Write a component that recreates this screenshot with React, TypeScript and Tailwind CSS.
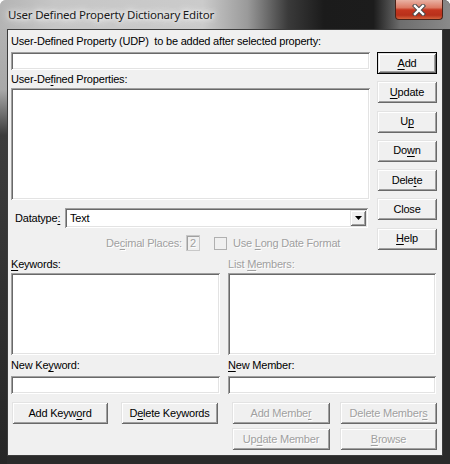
import type { ReactNode } from 'react';

const raised =
  'shadow-[inset_1px_1px_0_#e3e3e3,inset_-1px_-1px_0_#696969,inset_2px_2px_0_#ffffff,inset_-2px_-2px_0_#a0a0a0]';
const sunken =
  'shadow-[inset_1px_1px_0_#a0a0a0,inset_-1px_-1px_0_#ffffff,inset_2px_2px_0_#696969,inset_-2px_-2px_0_#e3e3e3]';
const greyText = 'text-[#a0a0a0] [text-shadow:1px_1px_0_#ffffff]';

function U({ children }: { children: ReactNode }) {
  return <span className="underline underline-offset-[2px]">{children}</span>;
}

interface BtnProps {
  children: ReactNode;
  disabled?: boolean;
  isDefault?: boolean;
  className?: string;
}

function Btn({ children, disabled, isDefault, className = '' }: BtnProps) {
  return (
    <div
      className={`h-[22px] flex items-center justify-center bg-[#f0f0f0] text-[11px] leading-[13px] whitespace-nowrap ${
        isDefault ? 'border border-black' : ''
      } ${raised} ${disabled ? greyText : 'text-black'} ${className}`}
    >
      {children}
    </div>
  );
}

function Label({ children, disabled }: { children: ReactNode; disabled?: boolean }) {
  return (
    <div className={`h-[13px] text-[11px] leading-[13px] whitespace-nowrap ${disabled ? greyText : 'text-black'}`}>
      {children}
    </div>
  );
}

function TitleBar() {
  return (
    <div className="h-[29px] flex items-start bg-[linear-gradient(90deg,#b4b4b4_0%,#c6c6c6_12%,#cbcbcb_45%,#9a9a9a_55%,#3a3a3a_64%,#1b1b1b_72%,#1c1c1c_83%,#6e6e6e_89%,#8a8a8a_100%)]">
      <div className="pl-[8px] pt-[7px] text-[11.5px] leading-[16px] text-[#1a1a1a] [font-family:'Noto_Sans',sans-serif] [text-shadow:0_0_8px_#ffffff,0_0_4px_#ffffff,0_0_12px_#ffffff]">
        User Defined Property Dictionary Editor
      </div>
      <div className="ml-auto mr-[7px] w-[48px] h-[20px] rounded-b-[4px] border border-t-0 border-[#4a2218] bg-[linear-gradient(180deg,#e9b2a4_0%,#dc7a64_40%,#c4361f_52%,#b8301a_80%,#d2623c_100%)] flex items-center justify-center">
        <svg width="14" height="12" viewBox="0 0 14 12">
          <path d="M3 2 L11 10 M11 2 L3 10" stroke="#4a4a4a" strokeWidth="4.4" strokeLinecap="square" />
          <path d="M3 2 L11 10 M11 2 L3 10" stroke="#ffffff" strokeWidth="2.4" strokeLinecap="square" />
        </svg>
      </div>
    </div>
  );
}

export default function App() {
  return (
    <div className="w-[450px] h-[464px] flex flex-col rounded-t-[6px] overflow-hidden [font-family:'Liberation_Sans',Arial,sans-serif] tracking-[-0.2px] bg-[linear-gradient(90deg,transparent_0,transparent_7px,#2a2a2a_7px),linear-gradient(180deg,#b8b8b8_0,#a8a8a8_90px,#3c3c3c_135px,#262626_100%)]">
      <TitleBar />

      <div className="mx-[7px] mb-[8px] flex-1 bg-[#f0f0f0] border border-[#3c3c3c] pl-[3px] pr-[5px] pt-[5px] flex flex-col">
        {/* top part: UDP entry, list, datatype + right hand buttons */}
        <div className="flex gap-[7px]">
          <div className="w-[359px] flex flex-col">
            <Label>User-Defined Property (UDP)&nbsp; to be added after selected property:</Label>
            <div className={`mt-[4px] h-[18px] bg-white ${sunken}`} />

            <div className="mt-[3px]">
              <Label>
                User-De<U>f</U>ined Properties:
              </Label>
            </div>
            <div className={`mt-[2px] h-[112px] bg-white ${sunken}`} />

            <div className="mt-[8px] h-[20px] flex items-center pr-[2px]">
              <div className="w-[54px] pl-[4px] text-[11px] leading-[13px]">
                Datatype<U>:</U>
              </div>
              <div className={`flex-1 h-[20px] bg-white flex items-center ${sunken}`}>
                <span className="pl-[5px] text-[11px] leading-[13px] text-black">Text</span>
                <div className={`ml-auto mr-[2px] w-[16px] h-[16px] bg-[#f0f0f0] flex items-center justify-center ${raised}`}>
                  <svg width="7" height="4" viewBox="0 0 7 4">
                    <path d="M0 0 H7 L3.5 4 Z" fill="#000" />
                  </svg>
                </div>
              </div>
            </div>

            <div className="mt-[7px] h-[16px] flex items-center pl-[95px]">
              <div className={`text-[11px] leading-[13px] whitespace-nowrap ${greyText}`}>
                De<U>c</U>imal Places:
              </div>
              <div
                className={`ml-[4px] w-[14px] h-[16px] flex items-center justify-center text-[11px] leading-[13px] bg-[#f0f0f0] border border-[#c8c8c8] shadow-[inset_1px_1px_0_#a0a0a0] ${greyText}`}
              >
                2
              </div>
              <div className="ml-[14px] w-[13px] h-[13px] border border-[#b0b0b0] bg-[#f0f0f0]" />
              <div className={`ml-[6px] text-[11px] leading-[13px] whitespace-nowrap ${greyText}`}>
                Use <U>L</U>ong Date Format
              </div>
            </div>
          </div>

          <div className="w-[60px] mt-[17px] flex flex-col gap-[7.3px]">
            <Btn isDefault>
              <U>A</U>dd
            </Btn>
            <Btn>
              <U>U</U>pdate
            </Btn>
            <Btn>
              U<U>p</U>
            </Btn>
            <Btn>
              Do<U>w</U>n
            </Btn>
            <Btn>
              Dele<U>t</U>e
            </Btn>
            <Btn>Close</Btn>
            <Btn>
              <U>H</U>elp
            </Btn>
          </div>
        </div>

        {/* bottom part: keywords and list members */}
        <div className="mt-[7px] w-[426px] grid grid-cols-[209px_209px] gap-x-[8px]">
          <div className="flex flex-col">
            <Label>
              <U>K</U>eywords:
            </Label>
            <div className={`mt-[2px] h-[82px] bg-white ${sunken}`} />
            <div className="mt-[4px]">
              <Label>
                New Ke<U>y</U>word:
              </Label>
            </div>
            <div className={`mt-[4px] h-[18px] bg-white ${sunken}`} />
            <div className="mt-[8px] flex">
              <Btn className="ml-[1px] w-[96px]">
                Add Keyw<U>o</U>rd
              </Btn>
              <Btn className="ml-[13px] w-[97px]">
                D<U>e</U>lete Keywords
              </Btn>
            </div>
          </div>

          <div className="flex flex-col">
            <Label disabled>
              List <U>M</U>embers:
            </Label>
            <div className={`mt-[2px] h-[82px] w-[208px] bg-white ${sunken}`} />
            <div className="mt-[4px]">
              <Label>
                <U>N</U>ew Member:
              </Label>
            </div>
            <div className={`mt-[4px] h-[18px] w-[208px] bg-white ${sunken}`} />
            <div className="mt-[8px] flex">
              <Btn disabled className="ml-[4px] w-[98px]">
                Add Membe<U>r</U>
              </Btn>
              <Btn disabled className="ml-[10px] w-[97px]">
                Delete Member<U>s</U>
              </Btn>
            </div>
            <div className="mt-[4px] flex">
              <Btn disabled className="ml-[4px] w-[98px]">
                Up<U>d</U>ate Member
              </Btn>
              <Btn disabled className="ml-[10px] w-[97px]">
                <U>B</U>rowse
              </Btn>
            </div>
          </div>
        </div>
      </div>
    </div>
  );
}
